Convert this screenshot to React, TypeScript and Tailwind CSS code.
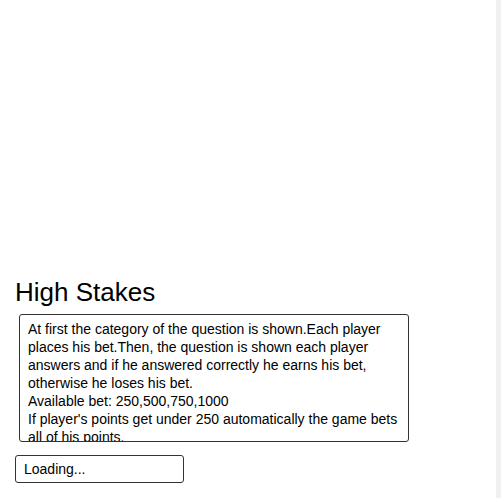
import React from 'react'

const rules = [
  'At first the category of the question is shown.Each player places his bet.Then, the question is shown each player answers and if he answered correctly he earns his bet, otherwise he loses his bet.',
  'Available bet: 250,500,750,1000',
  "If player's points get under 250 automatically the game bets all of his points.",
]

function App() {
  return (
    <div className="flex min-h-[498px] w-full bg-white font-['Liberation_Sans',Arial,sans-serif] text-black">
      <div className="flex-1 pl-[15px] pt-[277px]">
        <h1 className="text-[26px] leading-[30px] font-normal">High Stakes</h1>
        <div className="ml-[4px] mt-[7px] h-[128px] w-[390px] overflow-hidden rounded-[3px] border border-[#333] px-[8px] pt-[5px] text-[14px] leading-[18px]">
          {rules.map((line, i) => (
            <p key={i}>{line}</p>
          ))}
        </div>
        <div className="mt-[13px] flex h-[28px] w-[169px] items-center rounded-[3px] border border-[#333] px-[8px] text-[14px]">
          Loading...
        </div>
      </div>
      <div className="w-[5px] bg-[#f0f0f0]" />
    </div>
  )
}

export default App
